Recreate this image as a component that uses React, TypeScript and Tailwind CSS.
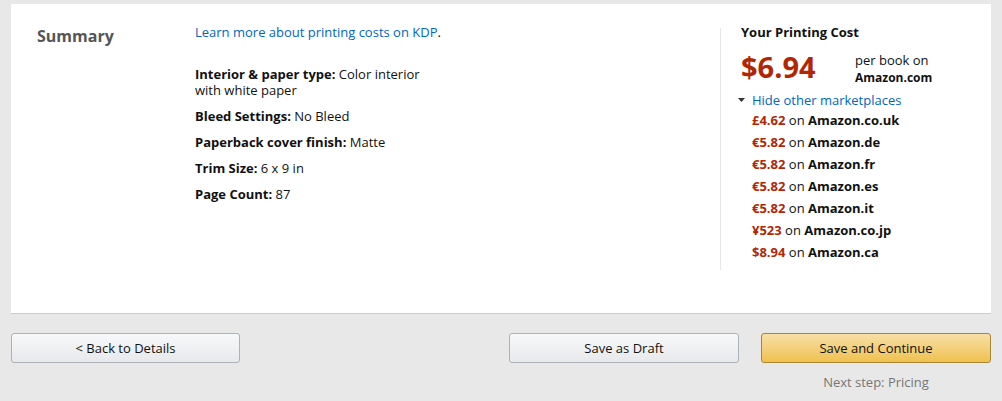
const font = { fontFamily: '"Open Sans", "Noto Sans", Arial, sans-serif' };

const marketplaces = [
  { price: "£4.62", site: "Amazon.co.uk" },
  { price: "€5.82", site: "Amazon.de" },
  { price: "€5.82", site: "Amazon.fr" },
  { price: "€5.82", site: "Amazon.es" },
  { price: "€5.82", site: "Amazon.it" },
  { price: "¥523", site: "Amazon.co.jp" },
  { price: "$8.94", site: "Amazon.ca" },
];

function Detail({ label, value }: { label: string; value: string }) {
  return (
    <p className="mb-[10px] w-[230px]">
      <span className="font-bold">{label}:</span> {value}
    </p>
  );
}

export default function App() {
  return (
    <div
      className="h-[401px] w-[1002px] bg-[#e8e8e8] px-[11px] pt-[4px] text-[13px] leading-[16px] text-[#111]"
      style={font}
    >
      {/* Summary panel */}
      <div className="flex h-[310px] w-[980px] border-b border-[#cccccc] bg-white">
        <div className="w-[184px] pl-[26px] pt-[21px]">
          <h2 className="text-[16px] font-bold leading-[22px] text-[#555]">Summary</h2>
        </div>

        <div className="flex-1 pt-[20px]">
          <a className="text-[#0066c0]">Learn more about printing costs on KDP</a>.
          <div className="mt-[26px]">
            <Detail label="Interior & paper type" value="Color interior with white paper" />
            <Detail label="Bleed Settings" value="No Bleed" />
            <Detail label="Paperback cover finish" value="Matte" />
            <Detail label="Trim Size" value="6 x 9 in" />
            <Detail label="Page Count" value="87" />
          </div>
        </div>

        <div className="mr-[22px] mt-[24px] h-[242px] w-[249px] border-l border-[#e7e7e7] pl-[20px]">
          <h3 className="-mt-[4px] font-bold">Your Printing Cost</h3>
          <div className="mt-[9px] flex items-start">
            <span className="w-[114px] text-[29px] font-bold leading-[36px] text-[#b12704]">$6.94</span>
            <div className="pt-[2px] leading-[18px]">
              <div>per book on</div>
              <div className="text-[12px] font-bold">Amazon.com</div>
            </div>
          </div>
          <div className="mt-[5px] flex items-center">
            <svg width="11" height="16" viewBox="0 0 11 16" className="-ml-[4px] mr-[4px]">
              <path d="M1 6h7l-3.5 4z" fill="#333" />
            </svg>
            <a className="text-[#0066c0]">Hide other marketplaces</a>
          </div>
          <ul className="mt-[1px] pl-[11px]">
            {marketplaces.map((m) => (
              <li key={m.site} className="leading-[22px]">
                <span className="font-bold text-[#b12704]">{m.price}</span> on{" "}
                <span className="font-bold">{m.site}</span>
              </li>
            ))}
          </ul>
        </div>
      </div>

      {/* Actions */}
      <div className="mt-[19px] flex w-[980px] items-start">
        <button className="h-[30px] w-[229px] rounded-[3px] border border-[#adb1b8] bg-gradient-to-b from-[#f7f8fa] to-[#e7e9ec] text-[13px] text-[#111]">
          &lt; Back to Details
        </button>
        <div className="flex-1" />
        <button className="h-[30px] w-[230px] rounded-[3px] border border-[#adb1b8] bg-gradient-to-b from-[#f7f8fa] to-[#e7e9ec] text-[13px] text-[#111]">
          Save as Draft
        </button>
        <div className="ml-[22px] flex w-[230px] flex-col items-center">
          <button className="h-[30px] w-full rounded-[3px] border border-[#a88734] bg-gradient-to-b from-[#f7dfa5] to-[#f0c14b] text-[13px] text-[#111]">
            Save and Continue
          </button>
          <span className="mt-[11px] text-[#767676]">Next step: Pricing</span>
        </div>
      </div>
    </div>
  );
}
